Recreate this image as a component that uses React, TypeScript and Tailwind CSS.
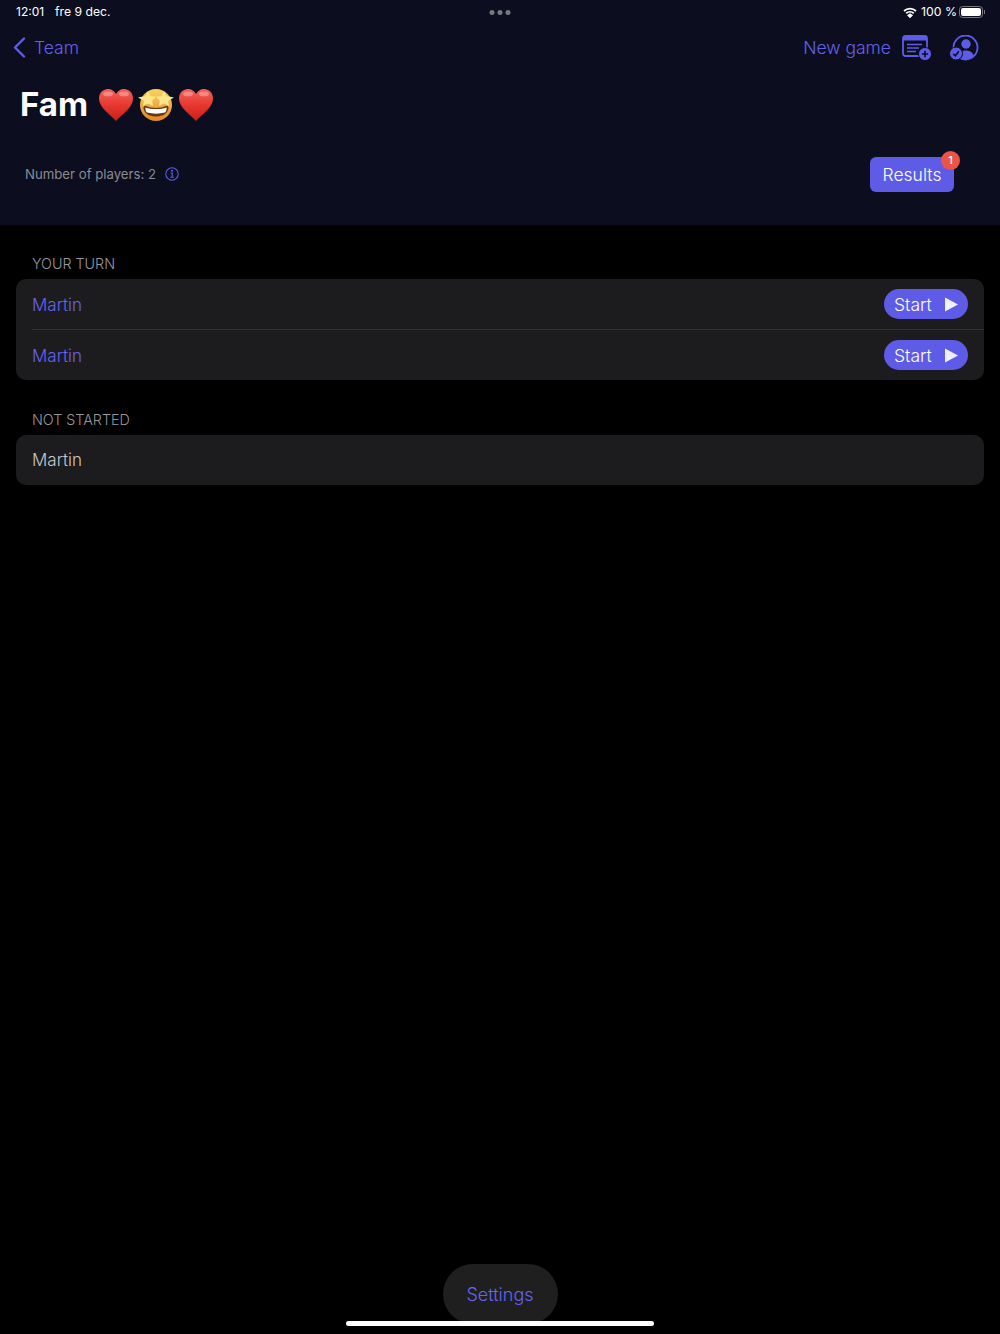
const Heart = () => (
  <svg width="36" height="34" viewBox="0 0 36 34" className="shrink-0">
    <defs>
      <linearGradient id="heartFill" x1="0" y1="0" x2="0" y2="1">
        <stop offset="0" stopColor="#f4625a" />
        <stop offset="0.55" stopColor="#e5342c" />
        <stop offset="1" stopColor="#c8201c" />
      </linearGradient>
    </defs>
    <path
      d="M18 33C13 27 1 20 1 10.500C1 4.500 5.500 1 10 1C13.500 1 16.500 3 18 6C19.500 3 22.500 1 26 1C30.500 1 35 4.500 35 10.500C35 20 23 27 18 33Z"
      fill="url(#heartFill)"
    />
    <ellipse cx="10" cy="6" rx="5" ry="2.500" fill="#fff" opacity="0.3" />
    <ellipse cx="26" cy="6" rx="5" ry="2.500" fill="#fff" opacity="0.3" />
  </svg>
)

const StarStruck = () => (
  <svg width="36" height="34" viewBox="0 0 36 34" className="shrink-0">
    <defs>
      <linearGradient id="faceFill" x1="0" y1="0" x2="0" y2="1">
        <stop offset="0" stopColor="#fbd25e" />
        <stop offset="1" stopColor="#e0872a" />
      </linearGradient>
    </defs>
    <circle cx="18" cy="17" r="16" fill="url(#faceFill)" />
    <path d="M7 24C4 19 6 17 8 18C13 20.500 23 20.500 28 18C30 17 32 19 29 24C25 30 11 30 7 24Z" fill="#6b3510" />
    <path d="M7.500 19.500C13 21.500 23 21.500 28.500 19.500C29 21 28 24 27 24.500C21 26 15 26 9 24.500C8 24 7 21 7.500 19.500Z" fill="#fff" />
    <path d="M10 3L12.500 8L18 8.800L14.200 12.800L15 18L10 15.500L5 18L5.800 12.800L0 9.500L7.500 8Z" fill="#fbe68a" />
    <path d="M26 3L28.500 8L36 9.500L30.200 12.800L31 18L26 15.500L21 18L21.800 12.800L18 8.800L23.500 8Z" fill="#fbe68a" />
  </svg>
)

const MoreDots = () => (
  <div className="absolute left-1/2 top-[10px] flex -translate-x-1/2 gap-[3px]">
    <span className="h-[5px] w-[5px] rounded-full bg-[#77777d]" />
    <span className="h-[5px] w-[5px] rounded-full bg-[#77777d]" />
    <span className="h-[5px] w-[5px] rounded-full bg-[#77777d]" />
  </div>
)

const StatusBar = () => (
  <div className="flex h-6 items-center justify-between pl-4 pr-[15px] text-[12px] text-white">
    <div className="flex gap-[11px]">
      <span>12:01</span>
      <span className="text-[12.200px]">fre 9 dec.</span>
    </div>
    <div className="flex items-center">
      <svg width="14" height="11" viewBox="0 0 14 11" fill="none" stroke="#fff" strokeWidth="1.800">
        <path d="M1 4C4.500 0.800 9.500 0.800 13 4" />
        <path d="M3.200 6.200C5.300 4.400 8.700 4.400 10.800 6.200" />
        <path d="M5.400 8.400L7 7.400L8.600 8.400L7 10Z" fill="#fff" />
      </svg>
      <span className="ml-[4px] text-[12.300px]">100 %</span>
      <div className="ml-[2px] flex items-center">
        <div className="h-[12px] w-[24px] rounded-[3.500px] border border-[#77777d] p-[1px]">
          <div className="h-full w-full rounded-[2px] bg-white" />
        </div>
        <div className="ml-[1px] h-[4px] w-[1px] bg-[#77777d]" />
      </div>
    </div>
  </div>
)

const NewGameIcon = () => (
  <svg width="30" height="26" viewBox="0 0 30 26" fill="none">
    <rect x="1" y="1" width="24" height="20" rx="2.500" stroke="#5e5ce6" strokeWidth="1.800" />
    <path d="M1 3.500C1 2 2 1 3.500 1H22.500C24 1 25 2 25 3.500V5.500H1Z" fill="#5e5ce6" />
    <path d="M5 9.500H20M5 13H17M5 16.500H14" stroke="#5e5ce6" strokeWidth="1.600" />
    <circle cx="23" cy="19" r="6.500" fill="#5e5ce6" stroke="#0c0e20" strokeWidth="1" />
    <path d="M23 15.800V22.200M19.800 19H26.200" stroke="#0c0e20" strokeWidth="1.600" />
  </svg>
)

const PlayersIcon = () => (
  <svg width="30" height="26" viewBox="0 0 30 26" fill="none">
    <circle cx="16.500" cy="12.500" r="12" stroke="#5e5ce6" strokeWidth="1.800" />
    <circle cx="17" cy="9" r="4.700" fill="#5e5ce6" />
    <path d="M9 22C10 17.500 13 15.500 17 15.500C21 15.500 24 17.500 25 21.500C20 25.500 13 25.500 9 22Z" fill="#5e5ce6" />
    <circle cx="7" cy="18.500" r="6.500" fill="#5e5ce6" stroke="#0c0e20" strokeWidth="1" />
    <path d="M4.200 18.700L6.300 20.800L9.800 16.300" stroke="#0c0e20" strokeWidth="1.500" />
  </svg>
)

const Header = () => (
  <header className="relative h-[225px] shrink-0 bg-[#0c0e20]">
    <MoreDots />
    <StatusBar />
    <div className="mt-[3px] flex h-10 items-center justify-between pl-[13px] pr-[21px]">
      <div className="flex items-center gap-2 text-[#6361ea]">
        <svg width="13" height="21" viewBox="0 0 13 21" fill="none" stroke="#5e5ce6" strokeWidth="2.400" strokeLinecap="round" strokeLinejoin="round">
          <path d="M11 1.500L2 10.500L11 19.500" />
        </svg>
        <span className="mt-[3px] text-[17.500px] font-light">Team</span>
      </div>
      <div className="flex items-center text-[#6361ea]">
        <span className="mr-[11px] mt-[3px] text-[17.500px] font-light">New game</span>
        <div className="mt-[2px]">
          <NewGameIcon />
        </div>
        <div className="ml-[17px] mt-[2px]">
          <PlayersIcon />
        </div>
      </div>
    </div>
    <div className="mt-4 flex h-[44px] items-center pl-5">
      <h1 className="text-[33px] font-bold text-white">Fam</h1>
      <div className="ml-[10px] flex gap-[4px]">
        <Heart />
        <StarStruck />
        <Heart />
      </div>
    </div>
    <div className="mt-[30px] flex items-center justify-between pl-[25px] pr-[46px]">
      <div className="flex items-center gap-[9px] text-[13.200px] text-[#8a8a90]">
        <span>Number of players: 2</span>
        <svg width="14" height="14" viewBox="0 0 14 14" fill="none" stroke="#5e5ce6" strokeWidth="1.100">
          <circle cx="7" cy="7" r="6.200" />
          <path d="M5.500 6H7.200V10.300M5.300 10.300H9" />
          <circle cx="7" cy="3.800" r="0.500" fill="#5e5ce6" />
        </svg>
      </div>
      <div className="relative flex h-[35px] w-[84px] items-center justify-center rounded-[6px] bg-[#5e5ce6] text-[17.500px] font-light text-white">
        <span className="mt-[2px]">Results</span>
        <span className="absolute -right-[6px] -top-[6px] flex h-[19px] w-[19px] items-center justify-center rounded-full bg-[#eb5545] text-[11px] font-medium text-white">
          1
        </span>
      </div>
    </div>
  </header>
)

const StartButton = () => (
  <div className="flex h-[30px] w-[84px] items-center justify-between rounded-full bg-[#5e5ce6] pl-[10px] pr-[10px] text-[17.500px] font-light text-white">
    <span className="mt-[3px]">Start</span>
    <svg width="13" height="15" viewBox="0 0 13 15">
      <path d="M0 0.500L13 7.500L0 14.500Z" fill="#f0f0ff" />
    </svg>
  </div>
)

const TurnRow = () => (
  <div className="flex h-[50px] items-center justify-between pl-4 pr-4">
    <span className="mt-[3px] text-[17px] font-light text-[#6664f0]">Martin</span>
    <StartButton />
  </div>
)

export default function App() {
  return (
    <div className="relative flex h-[1334px] w-[1000px] flex-col overflow-hidden bg-black font-['Inter',sans-serif]">
      <Header />
      <main className="flex-1 px-4">
        <div className="mt-[30px] h-[24px] pl-4 text-[14.300px] font-light leading-[18px] text-[#98989d]">YOUR TURN</div>
        <div className="overflow-hidden rounded-[10px] bg-[#1c1c1e]">
          <TurnRow />
          <div className="ml-4 h-px bg-[#333335]" />
          <TurnRow />
        </div>
        <div className="mt-[31px] h-[24px] pl-4 text-[14.300px] font-light leading-[18px] text-[#98989d]">NOT STARTED</div>
        <div className="flex h-[50px] items-center rounded-[10px] bg-[#1c1c1e] pl-4 pt-[1px] text-[17px] font-light text-[#c7c7cc]">Martin</div>
      </main>
      <footer className="flex h-[70px] justify-center">
        <div className="flex h-[60px] w-[115px] items-center justify-center rounded-full bg-[#1f1f1f] text-[18px] font-light text-[#6664f0]">
          Settings
        </div>
      </footer>
      <div className="absolute bottom-[8px] left-1/2 h-[5px] w-[308px] -translate-x-1/2 rounded-full bg-white" />
    </div>
  )
}
